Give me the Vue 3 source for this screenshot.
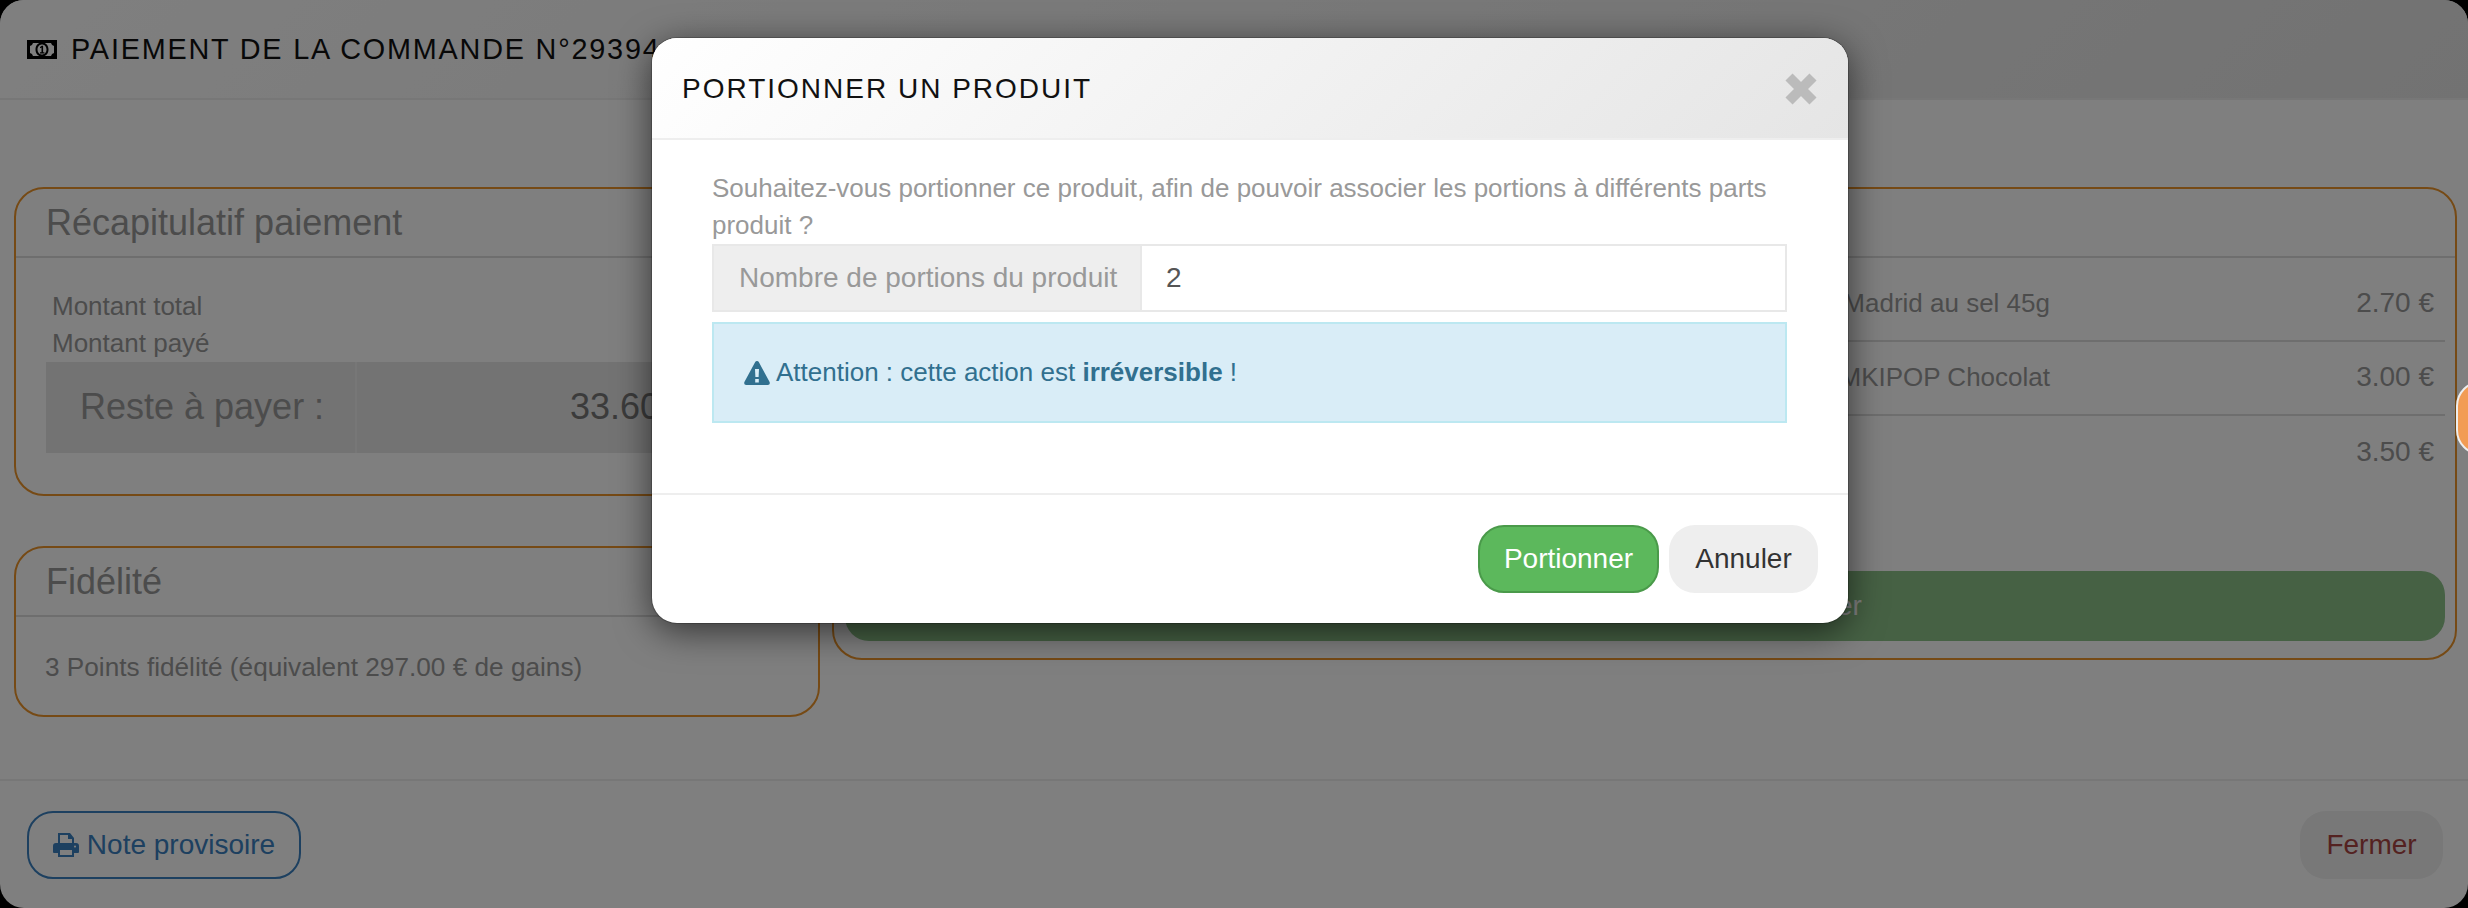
<template>
  <div class="screen">
    <div class="payment">
      <header class="payment-header">
        <svg class="bill-icon" viewBox="0 0 30 19">
          <path fill-rule="evenodd" d="M0 0h30v19H0zM3 6v7a4 4 0 0 1 3 3h18a4 4 0 0 1 3-3V6a4 4 0 0 1-3-3H6a4 4 0 0 1-3 3z" />
          <path fill-rule="evenodd" d="M15 2.500c-4 0-6.500 3.100-6.500 7s2.500 7 6.500 7 6.500-3.100 6.500-7-2.500-7-6.500-7zM15 4.500c2.700 0 4.500 2.200 4.500 5s-1.800 5-4.500 5-4.500-2.200-4.500-5 1.800-5 4.500-5z" />
          <path d="M13 13.500h4.400v-1.200h-1.300V5.800h-1.300l-1.800 1.200v1.300l1.500-.8v4.800H13z" />
        </svg>
        <span>PAIEMENT DE LA COMMANDE N°29394</span>
      </header>

      <main class="payment-body">
        <div class="left-col">
          <section class="box recap">
            <h3 class="box-title">Récapitulatif paiement</h3>
            <div class="recap-content">
              <div class="recap-line">Montant total</div>
              <div class="recap-line">Montant payé</div>
              <div class="rest">
                <div class="rest-label">Reste à payer :</div>
                <div class="rest-value">33.60 €</div>
              </div>
            </div>
          </section>
          <section class="box fidelity">
            <h3 class="box-title">Fidélité</h3>
            <p class="fidelity-text">3 Points fidélité (équivalent 297.00 € de gains)</p>
          </section>
        </div>

        <section class="box products">
          <h3 class="box-title">Produits</h3>
          <div class="product-list">
            <div v-for="p in products" :key="p.price" class="product-row">
              <span class="product-name">{{ p.name }}</span>
              <span class="product-price">{{ p.price }}</span>
            </div>
          </div>
          <button class="validate-btn">Valider la commande et encaisser</button>
        </section>
      </main>

      <footer class="payment-footer">
        <button class="note-btn">
          <svg class="print-icon" viewBox="0 0 26 24">
            <path d="M5 0h12l4 5v6h-2V6h-4V2H7v9H5z" />
            <path fill-rule="evenodd" d="M3 10h20a3 3 0 0 1 3 3v6a1 1 0 0 1-1 1h-4v-4H5v4H1a1 1 0 0 1-1-1v-6a3 3 0 0 1 3-3zM22 12.500a1 1 0 1 0 .01 0z" />
            <path fill-rule="evenodd" d="M5 15h16v9H5zM7 17v5h12v-5z" />
          </svg>
          Note provisoire
        </button>
        <button class="close-btn">Fermer</button>
      </footer>
    </div>

    <div class="overlay"></div>
    <div class="side-tab"></div>

    <div class="dialog">
      <div class="dialog-header">
        <h4 class="dialog-title">PORTIONNER UN PRODUIT</h4>
        <svg class="dialog-close" viewBox="0 0 32 32">
          <path d="M4 4l24 24M28 4L4 28" />
        </svg>
      </div>
      <div class="dialog-body">
        <p class="question">Souhaitez-vous portionner ce produit, afin de pouvoir associer les portions à différents parts produit ?</p>
        <div class="input-group">
          <span class="addon">Nombre de portions du produit</span>
          <input class="portion-input" type="text" v-model="portions" />
        </div>
        <div class="alert">
          <svg class="warn-icon" viewBox="0 0 26 24">
            <path fill-rule="evenodd" d="M13 0c.8 0 1.400.4 1.800 1.100l10.800 20c.6 1.300-.2 2.900-1.800 2.900H2.200C.6 24-.2 22.400.4 21.100l10.800-20C11.600.4 12.200 0 13 0zM11 8l.4 8h3.200l.4-8zM11.200 18v3.400h3.600V18z" />
          </svg>
          <span>Attention : cette action est <b>irréversible</b> !</span>
        </div>
      </div>
      <div class="dialog-footer">
        <button class="confirm-btn">Portionner</button>
        <button class="cancel-btn">Annuler</button>
      </div>
    </div>
  </div>
</template>

<script setup>
import { ref } from "vue";

const portions = ref("2");

const products = [
  { name: "Madrid au sel 45g", price: "2.70 €" },
  { name: "MKIPOP Chocolat", price: "3.00 €" },
  { name: "", price: "3.50 €" },
];
</script>

<style>
html,
body {
  margin: 0;
  background: #000;
  overflow: hidden;
}
</style>

<style scoped>
.screen {
  position: relative;
  width: 2468px;
  height: 908px;
  overflow: hidden;
  font-family: "Liberation Sans", Arial, sans-serif;
  font-size: 26px;
  color: #999;
}

button {
  font-family: inherit;
  font-size: 28px;
  cursor: pointer;
}

/* Page behind the dialog */
.payment {
  height: 908px;
  box-sizing: border-box;
  background: #fff;
  border-radius: 24px;
  display: flex;
  flex-direction: column;
}

.payment-header {
  height: 100px;
  flex-shrink: 0;
  box-sizing: border-box;
  padding: 0 27px;
  display: flex;
  align-items: center;
  gap: 14px;
  color: #111;
  font-size: 28.800px;
  letter-spacing: 1.8px;
  background: linear-gradient(135deg, #fff 0%, #e5e5e5 100%);
  border-radius: 24px 24px 0 0;
  border-bottom: 2px solid #eee;
}

.bill-icon {
  width: 30px;
  height: 19px;
  fill: #000;
}

.payment-body {
  flex: 1;
  display: grid;
  grid-template-columns: 806px 1625px;
  gap: 12px;
  padding: 87px 0 0 14px;
  align-items: start;
}

.left-col {
  display: flex;
  flex-direction: column;
  gap: 50px;
}

.box {
  box-sizing: border-box;
  border: 2px solid #ec942a;
  border-radius: 30px;
  min-width: 0;
}

.box-title {
  margin: 0;
  height: 69px;
  box-sizing: border-box;
  padding: 0 30px;
  display: flex;
  align-items: center;
  font-size: 36px;
  font-weight: normal;
  color: #999;
  border-bottom: 2px solid #ddd;
}

.recap {
  height: 309px;
}

.recap-content {
  padding: 30px 30px 0 30px;
}

.recap-line {
  height: 37px;
  line-height: 37px;
  padding-left: 6px;
}

.rest {
  display: flex;
  height: 91px;
  background: #e6e6e6;
  font-size: 36px;
}

.rest-label {
  width: 311px;
  box-sizing: border-box;
  padding-left: 34px;
  line-height: 90px;
  border-right: 2px solid #eee;
}

.rest-value {
  flex: 1;
  padding-left: 213px;
  line-height: 90px;
  color: #777;
}

.fidelity {
  height: 171px;
}

.fidelity-text {
  margin: 0;
  padding: 35px 29px;
  font-size: 26.200px;
}

.products {
  height: 473px;
  display: flex;
  flex-direction: column;
}

.product-list {
  padding: 10px 10px 0;
}

.product-row {
  display: grid;
  grid-template-columns: 1206px 1fr;
  align-items: center;
  height: 74px;
  box-sizing: border-box;
  padding-bottom: 2px;
  border-bottom: 2px solid #ddd;
}

.product-row:last-child {
  border-bottom: none;
}

.product-name {
  text-align: right;
}

.product-price {
  text-align: right;
  padding-right: 11px;
  font-size: 28px;
}

.validate-btn {
  margin: auto 10px 17px 11px;
  height: 70px;
  padding: 0 0 0 14px;
  border: none;
  border-radius: 24px;
  background: #8cc289;
  color: #fff;
}

.payment-footer {
  border-top: 2px solid #eee;
  flex-shrink: 0;
  height: 129px;
  box-sizing: border-box;
  padding: 30px 25px 0 27px;
  display: flex;
  justify-content: space-between;
  align-items: flex-start;
}

.note-btn {
  width: 274px;
  height: 68px;
  padding: 0;
  border: 2px solid #3a80c0;
  border-radius: 26px;
  background: #fff;
  color: #3a80c0;
  display: flex;
  align-items: center;
  justify-content: center;
  gap: 8px;
}

.print-icon {
  width: 26px;
  height: 24px;
  fill: currentColor;
}

.close-btn {
  width: 143px;
  height: 68px;
  border: none;
  border-radius: 26px;
  background: #f0f0f0;
  color: #a94442;
}

.overlay {
  position: absolute;
  inset: 0;
  background: rgba(0, 0, 0, 0.5);
}

.side-tab {
  position: absolute;
  right: -38px;
  top: 381px;
  width: 50px;
  height: 74px;
  box-sizing: border-box;
  background: #f29c54;
  border: 2px solid #eee;
  border-radius: 26px;
}

/* Dialog */
.dialog {
  position: absolute;
  left: 652px;
  top: 38px;
  width: 1196px;
  height: 585px;
  background: #fff;
  border-radius: 25px;
  box-shadow: 0 0 0 1px rgba(0, 0, 0, 0.2), 0 8px 36px rgba(0, 0, 0, 0.6);
  display: flex;
  flex-direction: column;
  overflow: hidden;
}

.dialog-header {
  height: 102px;
  flex-shrink: 0;
  box-sizing: border-box;
  padding: 1px 31px 0 30px;
  display: flex;
  align-items: center;
  justify-content: space-between;
  background: linear-gradient(135deg, #fff 0%, #e5e5e5 100%);
  border-bottom: 2px solid #eee;
}

.dialog-title {
  margin: 0;
  font-size: 28px;
  font-weight: normal;
  letter-spacing: 2px;
  color: #111;
}

.dialog-close {
  width: 32px;
  height: 32px;
  fill: none;
  stroke: #bbb;
  stroke-width: 10;
}

.dialog-body {
  flex: 1;
  padding: 30px 61px 0 60px;
}

.question {
  margin: 0;
  line-height: 37px;
}

.input-group {
  display: flex;
  height: 68px;
  box-sizing: border-box;
  border: 2px solid #e8e8e8;
  font-size: 28px;
}

.addon {
  width: 428px;
  box-sizing: border-box;
  padding-left: 25px;
  line-height: 64px;
  background: #eee;
  border-right: 2px solid #e8e8e8;
}

.portion-input {
  flex: 1;
  min-width: 0;
  border: none;
  outline: none;
  padding: 0 0 0 24px;
  font: inherit;
  color: #555;
}

.alert {
  height: 101px;
  margin-top: 10px;
  box-sizing: border-box;
  padding-left: 30px;
  display: flex;
  align-items: center;
  gap: 6px;
  background: #d9edf7;
  border: 2px solid #bce8f1;
  color: #31708f;
  font-size: 26px;
}

.warn-icon {
  width: 26px;
  height: 24px;
  fill: currentColor;
}

.dialog-footer {
  flex-shrink: 0;
  height: 130px;
  box-sizing: border-box;
  border-top: 2px solid #eee;
  padding: 30px 30px 0 0;
  display: flex;
  justify-content: flex-end;
  gap: 10px;
}

.confirm-btn {
  width: 181px;
  height: 68px;
  border: 2px solid #4a9a4a;
  border-radius: 26px;
  background: #5cb85c;
  color: #fff;
  padding: 0;
}

.cancel-btn {
  width: 149px;
  height: 68px;
  border: none;
  border-radius: 26px;
  background: #eee;
  color: #333;
  padding: 0;
}
</style>
